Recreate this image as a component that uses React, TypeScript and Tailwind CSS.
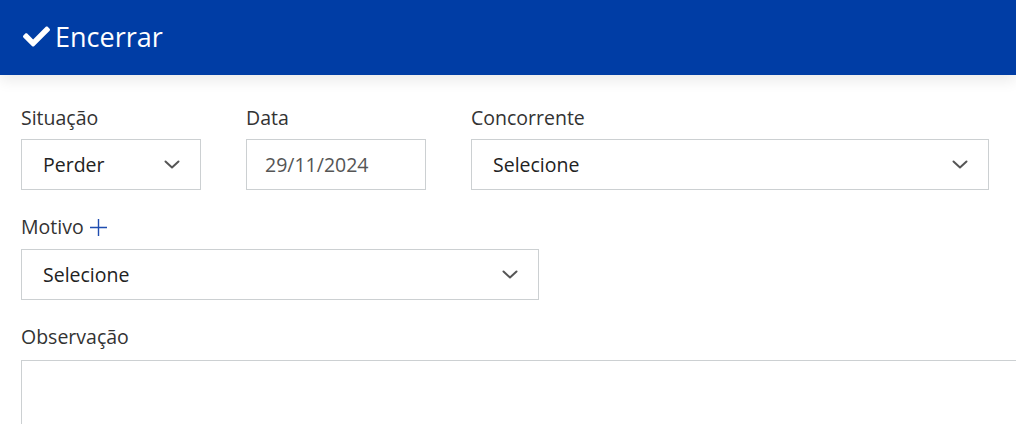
import React from "react";
import { FaCheck } from "react-icons/fa";

function Chevron() {
  return (
    <svg width="16" height="9" viewBox="0 0 16 9" className="shrink-0">
      <path d="M1.5 1.5 L8 7.5 L14.5 1.5" fill="none" stroke="#555" strokeWidth="2" strokeLinecap="round" strokeLinejoin="round" />
    </svg>
  );
}

function Select({ value, width }: { value: string; width: string }) {
  return (
    <div className={`${width} h-[51px] border border-[#ccd0d2] bg-white flex items-center justify-between pl-[21px] pr-[20px]`}>
      <span className="text-[19.5px] text-[#222]">{value}</span>
      <Chevron />
    </div>
  );
}

function Label({ children }: { children: React.ReactNode }) {
  return <div className="text-[19.5px] leading-[26px] text-[#333] flex items-center">{children}</div>;
}

export default function App() {
  return (
    <div className="w-[1016px] h-[424px] overflow-hidden bg-white" style={{ fontFamily: '"Open Sans", sans-serif' }}>
      <div className="h-[75px] bg-[#003da5] flex items-center pl-[23px] gap-[5px] shadow-[0_5px_14px_rgba(0,0,0,0.09)] relative">
        <FaCheck size={27} color="#fff" className="mt-[-2px]" />
        <span className="text-white text-[27px] leading-none mt-[-3px]">Encerrar</span>
      </div>
      <div className="pl-[21px] pt-[30px]">
        <div className="flex gap-[45px]">
          <div>
            <Label>Situação</Label>
            <div className="mt-[8px]"><Select value="Perder" width="w-[180px]" /></div>
          </div>
          <div>
            <Label>Data</Label>
            <div className="mt-[8px] w-[180px] h-[51px] border border-[#ccd0d2] flex items-center pl-[18px]">
              <span className="text-[19.5px] text-[#555]">29/11/2024</span>
            </div>
          </div>
          <div>
            <Label>Concorrente</Label>
            <div className="mt-[8px]"><Select value="Selecione" width="w-[518px]" /></div>
          </div>
        </div>
        <div className="mt-[24px]">
          <Label>
            Motivo
            <svg width="17" height="17" viewBox="0 0 17 17" className="ml-[6px]">
              <path d="M8.5 0 V17 M0 8.5 H17" stroke="#1f4db0" strokeWidth="1.4" />
            </svg>
          </Label>
          <div className="mt-[9px]"><Select value="Selecione" width="w-[518px]" /></div>
        </div>
        <div className="mt-[24px]">
          <Label>Observação</Label>
          <div className="mt-[10px] w-[1100px] h-[120px] border border-[#ccd0d2]" />
        </div>
      </div>
    </div>
  );
}
